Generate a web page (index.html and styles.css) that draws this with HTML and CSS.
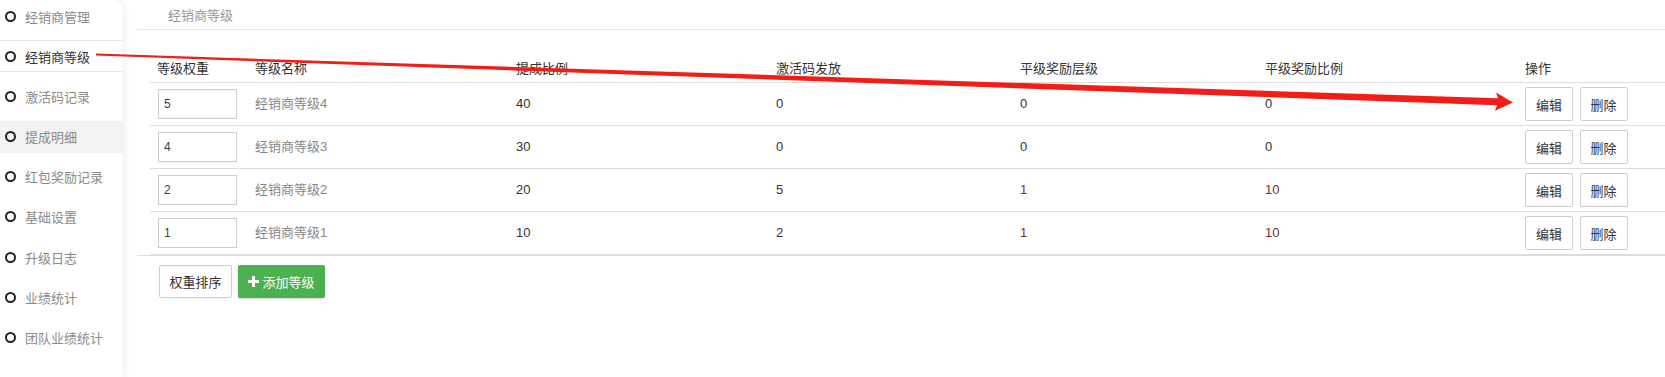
FILE: index.html
```html
<!DOCTYPE html>
<html lang="zh-CN">
<head>
  <meta charset="UTF-8" />
  <meta name="viewport" content="width=device-width, initial-scale=1" />
  <title>经销商等级</title>
  <link rel="stylesheet" href="styles.css">
</head>
<body>
  <div class="layout">
    <ul class="sidebar">
      <li class="nav-item"><span class="dot"></span>经销商管理</li>
      <li class="nav-item active"><span class="dot"></span>经销商等级</li>
      <li class="nav-item"><span class="dot"></span>激活码记录</li>
      <li class="nav-item hover"><span class="dot"></span>提成明细</li>
      <li class="nav-item"><span class="dot"></span>红包奖励记录</li>
      <li class="nav-item"><span class="dot"></span>基础设置</li>
      <li class="nav-item"><span class="dot"></span>升级日志</li>
      <li class="nav-item"><span class="dot"></span>业绩统计</li>
      <li class="nav-item"><span class="dot"></span>团队业绩统计</li>
    </ul>

    <div class="main">
      <div class="crumb">经销商等级</div>

      <div class="table-wrap">
        <table class="grade-table">
          <colgroup>
            <col style="width: 98px">
            <col style="width: 261px">
            <col style="width: 260px">
            <col style="width: 244px">
            <col style="width: 245px">
            <col style="width: 260px">
            <col>
          </colgroup>
          <thead>
            <tr>
              <th>等级权重</th>
              <th>等级名称</th>
              <th>提成比例</th>
              <th>激活码发放</th>
              <th>平级奖励层级</th>
              <th>平级奖励比例</th>
              <th>操作</th>
            </tr>
          </thead>
          <tbody id="gradeBody">
            <!-- 等级列表 -->
          </tbody>
        </table>
      </div>

      <div class="actions">
        <button class="btn btn-sort">权重排序</button>
        <button class="btn btn-green"><span class="plus"></span>添加等级</button>
      </div>
    </div>
  </div>

  <!-- 标注箭头 -->
  <svg class="arrow" width="1665" height="377" viewBox="0 0 1665 377">
    <polygon fill="#f41c16" points="96,53.6 1498,98.2 1496,92.4 1513,102.4 1495,110.8 1497,105.2 96,55.6" />
  </svg>

  <script>
    const grados = [
      { peso: 5, nombre: "经销商等级4", ticheng: 40, jihuo: 0, cengji: 0, bili: 0 },
      { peso: 4, nombre: "经销商等级3", ticheng: 30, jihuo: 0, cengji: 0, bili: 0 },
      { peso: 2, nombre: "经销商等级2", ticheng: 20, jihuo: 5, cengji: 1, bili: 10 },
      { peso: 1, nombre: "经销商等级1", ticheng: 10, jihuo: 2, cengji: 1, bili: 10 }
    ];

    const tbody = document.getElementById("gradeBody");

    grados.forEach(g => {
      const tr = document.createElement("tr");
      tr.innerHTML = `
        <td><input class="weight" type="text" value="${g.peso}"></td>
        <td class="name">${g.nombre}</td>
        <td>${g.ticheng}</td>
        <td>${g.jihuo}</td>
        <td class="${g.cengji > 0 ? "warn" : ""}">${g.cengji}</td>
        <td class="${g.bili > 0 ? "warn" : ""}">${g.bili}</td>
        <td class="ops">
          <button class="btn btn-sm">编辑</button>
          <button class="btn btn-sm">删除</button>
        </td>
      `;
      tbody.appendChild(tr);
    });
  </script>
</body>
</html>
```

FILE: styles.css
```css
body {
  margin: 0;
  font-family: "Liberation Sans", "Noto Sans CJK SC", sans-serif;
  font-size: 13px;
  color: #333;
  background: #fff;
  overflow: hidden;
}
.layout {
  display: flex;
  height: 377px;
}
.sidebar {
  width: 123px;
  flex-shrink: 0;
  margin: 0;
  padding: 0;
  list-style: none;
  background: #fff;
  border-top-right-radius: 10px;
  box-shadow: 1px 0 7px rgba(0, 0, 0, 0.09);
  position: relative;
  z-index: 1;
}
.nav-item {
  display: flex;
  align-items: center;
  height: 32px;
  margin-bottom: 8.2px;
  padding-left: 5px;
  box-sizing: border-box;
  color: #8a8a8a;
}
.nav-item.active {
  color: #333;
  border-top: 1px solid #e6e6e6;
  border-bottom: 1px solid #e6e6e6;
}
.nav-item.hover {
  background: #f2f2f2;
}
.dot {
  width: 11px;
  height: 11px;
  border: 2px solid #222;
  border-radius: 50%;
  box-sizing: border-box;
  margin-right: 9px;
}
.main {
  flex: 1;
  padding-left: 14px;
  min-width: 0;
}
.crumb {
  height: 26px;
  line-height: 26px;
  padding: 3px 0 0 31px;
  color: #999;
  border-bottom: 1px solid #e8e8e8;
}
.table-wrap {
  padding: 22px 0 0 13px;
  border-bottom: 1px solid #ddd;
}
.grade-table {
  width: calc(100% + 2px);
  table-layout: fixed;
  border-collapse: collapse;
}
.grade-table th {
  text-align: left;
  font-weight: normal;
  color: #333;
  line-height: 18px;
  padding: 8px 7px 4px;
  border-bottom: 1px solid #ddd;
}
.grade-table td {
  height: 30px;
  padding: 6px 7px;
  line-height: 18px;
  vertical-align: middle;
  border-bottom: 1px solid #ddd;
  color: #333;
}
.grade-table td.name {
  color: #888;
}
.grade-table td.warn {
  color: #7a2c2c;
}
.grade-table td.ops {
  padding-top: 4px;
  padding-bottom: 4px;
}
.weight {
  display: block;
  width: 79px;
  height: 30px;
  margin-left: 1px;
  padding: 0 5px;
  box-sizing: border-box;
  border: 1px solid #ccc;
  font-family: inherit;
  font-size: 12px;
  color: #3a3f55;
}
.btn {
  height: 33px;
  padding: 0 12px;
  background: #fff;
  border: 1px solid #ccc;
  border-radius: 2px;
  font-family: inherit;
  font-size: 13px;
  color: #333;
  cursor: pointer;
}
.btn-sm {
  width: 48px;
  height: 34px;
  padding: 0;
  margin-right: 3px;
}
.actions {
  display: flex;
  gap: 6px;
  padding: 9px 0 0 22px;
}
.btn-sort {
  width: 73px;
  padding: 0;
}
.btn-green {
  display: flex;
  align-items: center;
  justify-content: center;
  width: 87px;
  padding: 0;
  background: #4caf50;
  border-color: #4caf50;
  color: #fff;
  box-shadow: 0 1px 2px rgba(0, 0, 0, 0.15);
}
.plus {
  position: relative;
  width: 11px;
  height: 11px;
  margin-right: 3px;
}
.plus::before,
.plus::after {
  content: "";
  position: absolute;
  background: #fff;
}
.plus::before {
  left: 0;
  top: 4px;
  width: 11px;
  height: 3px;
}
.plus::after {
  left: 4px;
  top: 0;
  width: 3px;
  height: 11px;
}
.arrow {
  position: absolute;
  left: 0;
  top: 0;
  pointer-events: none;
  z-index: 5;
}
```
